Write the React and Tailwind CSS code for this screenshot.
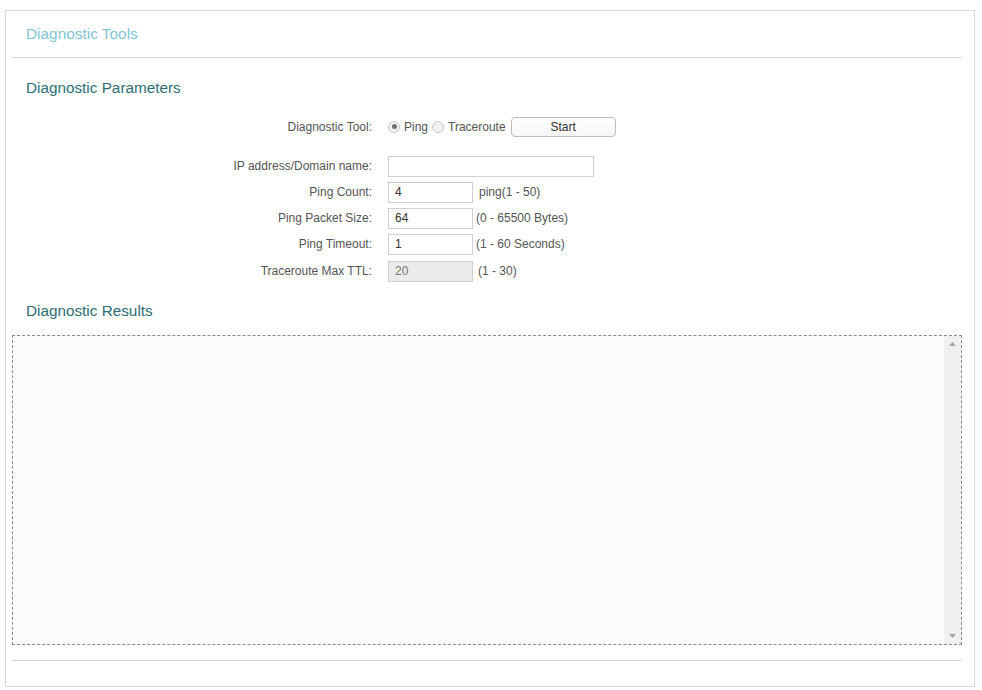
import React from 'react';

const font = { fontFamily: '"Liberation Sans", Arial, sans-serif' };

const Row = ({ label, children, className = '' }) => (
  <div className={`flex items-center ${className}`}>
    <div className="w-[376px] pr-[16px] text-right text-[12px] text-[#555]">{label}</div>
    <div className="flex items-center">{children}</div>
  </div>
);

const Field = ({ value = '', w = 'w-[85px]', disabled = false }) => (
  <div
    className={`${w} h-[21px] border border-[#cfcfcf] px-[6px] flex items-center text-[12px] ${
      disabled ? 'bg-[#ebebe9] text-[#777]' : 'bg-white text-[#333]'
    }`}
  >
    {value}
  </div>
);

const Radio = ({ checked }) => (
  <span className="w-[12px] h-[12px] rounded-full border border-[#c9c9c9] bg-[#f0f0f0] flex items-center justify-center">
    {checked && <span className="w-[5px] h-[5px] rounded-full bg-[#707070]" />}
  </span>
);

export default function App() {
  return (
    <div className="w-[982px] h-[690px] bg-white pt-[10px] pl-[5px]" style={font}>
      <div className="w-[970px] h-[677px] border border-[#d9d9d9] pl-[6px] pr-[12px] flex flex-col">
        <div className="h-[47px] border-b border-[#d5d5d5] flex items-center pl-[14px] text-[15.4px] text-[#84c4d5]">
          Diagnostic Tools
        </div>

        <div className="pl-[14px] pt-[19px] text-[15.3px] text-[#2d6e74]">Diagnostic Parameters</div>

        <div className="mt-[17px] flex flex-col">
          <Row label="Diagnostic Tool:">
            <div className="flex items-center gap-[4px] text-[12px] text-[#555]">
              <Radio checked />
              <span>Ping</span>
              <Radio />
              <span>Traceroute</span>
            </div>
            <button className="ml-[5px] w-[105px] h-[20px] border border-[#bdbdbd] rounded-[4px] bg-gradient-to-b from-white to-[#f6f6f6] text-[12px] text-[#333]">
              Start
            </button>
          </Row>

          <Row label="IP address/Domain name:" className="mt-[19px]">
            <Field w="w-[206px]" />
          </Row>
          <Row label="Ping Count:" className="mt-[5px]">
            <Field value="4" />
            <span className="ml-[6px] text-[12px] text-[#555]">ping(1 - 50)</span>
          </Row>
          <Row label="Ping Packet Size:" className="mt-[5px]">
            <Field value="64" />
            <span className="ml-[3px] text-[12px] text-[#555]">(0 - 65500 Bytes)</span>
          </Row>
          <Row label="Ping Timeout:" className="mt-[5px]">
            <Field value="1" />
            <span className="ml-[3px] text-[12px] text-[#555]">(1 - 60 Seconds)</span>
          </Row>
          <Row label="Traceroute Max TTL:" className="mt-[6px]">
            <Field value="20" disabled />
            <span className="ml-[5px] text-[12px] text-[#555]">(1 - 30)</span>
          </Row>
        </div>

        <div className="pl-[14px] pt-[18px] text-[15.3px] text-[#2d6e74]">Diagnostic Results</div>

        <div className="mt-[12px] h-[310px] border border-dashed border-[#8a8a8a] bg-[#fafcfb] flex justify-end">
          <div className="w-[17px] bg-[#f0f0f0] flex flex-col justify-between items-center py-[6px]">
            <svg width="7" height="4" viewBox="0 0 7 4"><path d="M0 4 L3.5 0 L7 4 Z" fill="#a3a3a3" /></svg>
            <svg width="7" height="4" viewBox="0 0 7 4"><path d="M0 0 L3.5 4 L7 0 Z" fill="#a3a3a3" /></svg>
          </div>
        </div>

        <div className="mt-[15px] border-b border-[#d5d5d5]" />
      </div>
    </div>
  );
}
